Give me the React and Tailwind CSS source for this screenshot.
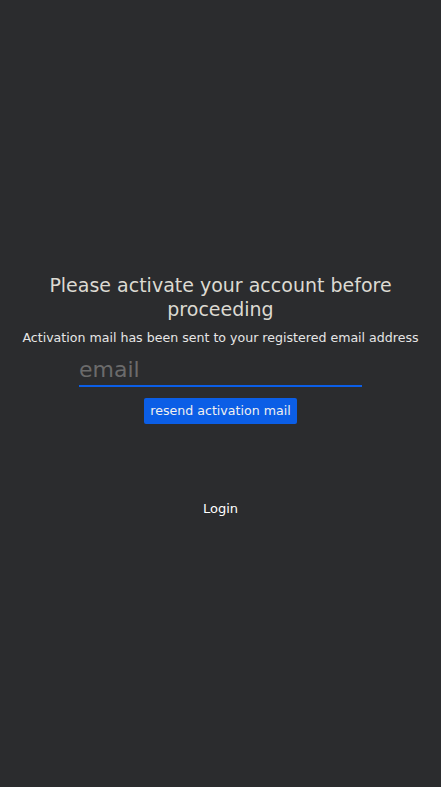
export default function App() {
  return (
    <div className="min-h-screen w-full bg-[#2b2c2e] flex flex-col items-center justify-center text-center pt-[4px]" style={{ fontFamily: '"DejaVu Sans", "Open Sans", sans-serif' }}>
      <h1 className="text-[19px] leading-[24px] text-[#dcdad2] font-normal px-[48px]">Please activate your account before proceeding</h1>
      <p className="mt-[8px] text-[12.6px] leading-[18px] text-[#e6e6e6]">Activation mail has been sent to your registered email address</p>
      <div className="mt-[3px] w-[283px] border-b-2 border-[#0b5ee6] text-left">
        <input placeholder="email" className="w-full bg-transparent outline-none text-[22px] leading-[31px] pt-[4px] text-[#cfcfcf] placeholder:text-[#6b6b6b]" style={{ fontFamily: 'inherit' }} />
      </div>
      <button className="mt-[11px] h-[26px] px-[6px] rounded-[2px] bg-[#0b5ee6] text-[12.6px] text-[#f0f0f0]" style={{ fontFamily: 'inherit' }}>resend activation mail</button>
      <div className="mt-[76px] text-[13px] leading-[18px] text-white">Login</div>
    </div>
  );
}
